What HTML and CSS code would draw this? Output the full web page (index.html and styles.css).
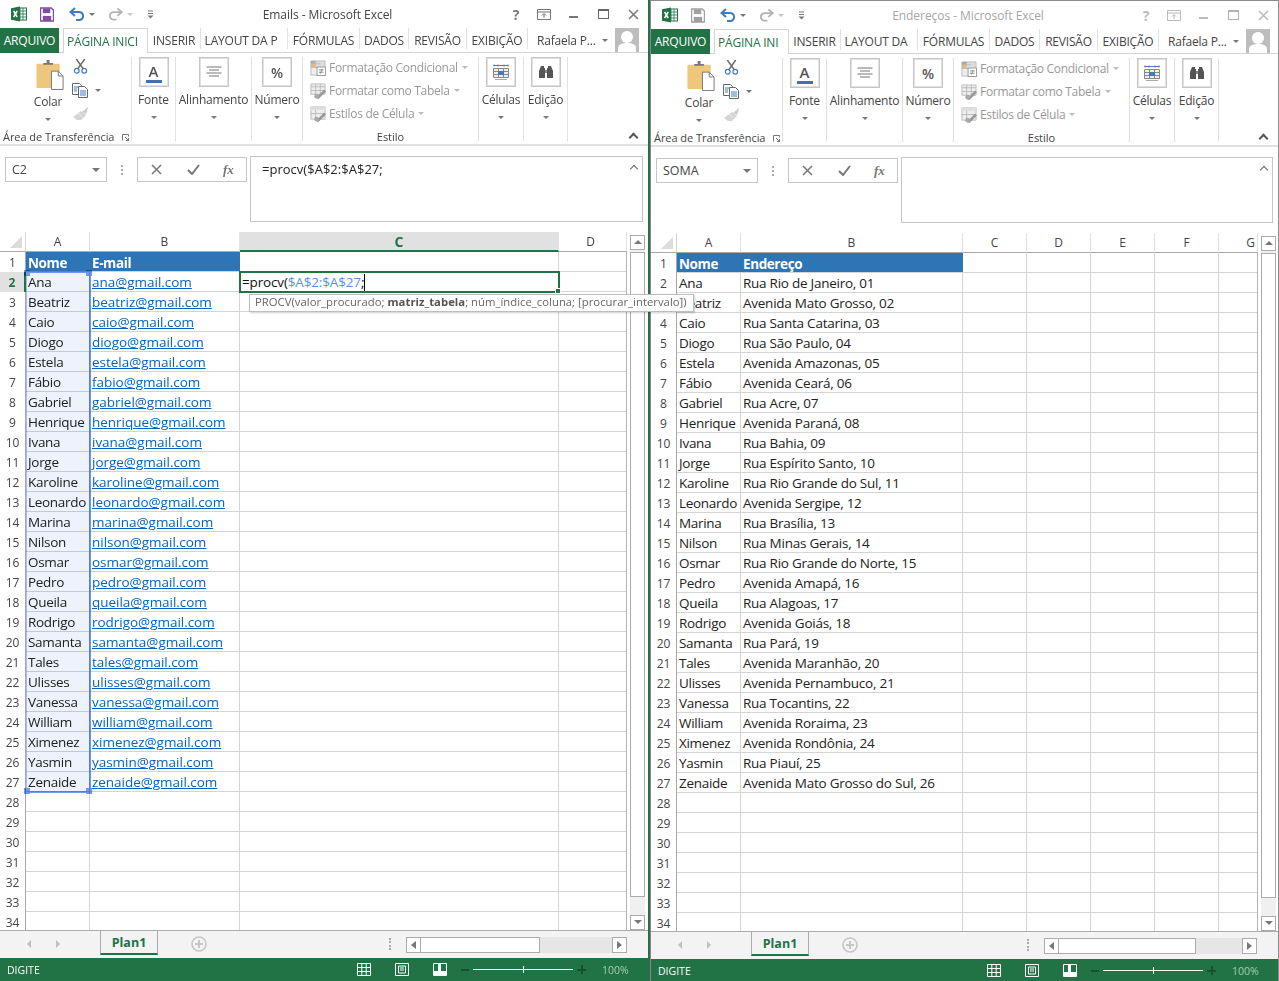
FILE: index.html
```html
<!DOCTYPE html>
<html lang="pt-BR">
<head>
<meta charset="utf-8">
<title>Excel - Emails e Endereços</title>
<link rel="stylesheet" href="styles.css">
</head>
<body>
<svg class="sprite" aria-hidden="true">
<symbol id="xl" viewBox="0 0 16 16"><rect x="6" y="2" width="9.5" height="12" fill="#fff" stroke="#217346"/><path d="M9 2v12M12 2v12M6 5h9M6 8h9M6 11h9" stroke="#217346" stroke-width=".8"/><path d="M0 2.2 9 .5v15l-9-1.7z" fill="#217346"/><path d="M2.6 5 6.2 11M6.2 5 2.6 11" stroke="#fff" stroke-width="1.5"/></symbol>
<symbol id="save" viewBox="0 0 15 15"><path d="M.5.5h11.5l2.5 2.5v11.5H.5z" fill="none" stroke="currentColor" stroke-width="1.6"/><rect x="3" y="1" width="8" height="5" fill="currentColor"/><rect x="3" y="9" width="9" height="5.5" fill="currentColor"/></symbol>
<symbol id="undo" viewBox="0 0 16 14"><path d="M6 1 1.5 5 6 9" fill="none" stroke="currentColor" stroke-width="2"/><path d="M2 5h7.5c6 0 6 8 .5 8H7" fill="none" stroke="currentColor" stroke-width="2"/></symbol>
<symbol id="redo" viewBox="0 0 16 14"><path d="M10 1l4.500 4L10 9" fill="none" stroke="currentColor" stroke-width="2"/><path d="M14 5H6.500c-6 0-6 8-.5 8h3" fill="none" stroke="currentColor" stroke-width="2"/></symbol>
<symbol id="custom" viewBox="0 0 7 9"><path d="M1 1h5M1 3.500h5" stroke="currentColor"/><path d="M.5 5.500h6L3.500 8.500z" fill="currentColor"/></symbol>
<symbol id="ribbonopt" viewBox="0 0 14 11"><path d="M.5.5h13v10H.5zM1 3h12" fill="none" stroke="currentColor"/><path d="M7 9V5M5 6.500 7 4.500 9 6.500" fill="none" stroke="currentColor"/></symbol>
<symbol id="clip" viewBox="0 0 29 31"><rect x="0" y="4" width="24" height="25" rx="1" fill="#efc77c"/><path d="M7 5V3h3.500V0h3v3H17v2z" fill="#777"/><path d="M15.500 11.500h7l5 5v14h-12z" fill="#fff" stroke="#777"/><path d="M22.500 11.500v5h5" fill="none" stroke="#777"/></symbol>
<symbol id="scis" viewBox="0 0 15 16"><circle cx="3.500" cy="12.500" r="2.500" fill="none" stroke="#3f7cbf" stroke-width="1.300"/><circle cx="11.500" cy="12.500" r="2.500" fill="none" stroke="#3f7cbf" stroke-width="1.300"/><path d="M3 0 10.500 10.500M12 0 4.500 10.500" stroke="#6a6a6a" stroke-width="1.600"/></symbol>
<symbol id="copy" viewBox="0 0 16 15"><path d="M.5.5h7l2 2v9h-9z" fill="#fff" stroke="#666"/><path d="M6.500 3.500h6l3 3v8h-9z" fill="#fff" stroke="#666"/><path d="M2 4h4M2 6h3M2 8h3M8 8h6M8 10h6M8 12h6" stroke="#3f7cbf"/></symbol>
<symbol id="brush" viewBox="0 0 16 14"><path d="M9 6 15.500.5 13 8z" fill="#ccc"/><path d="M8 5 13 9 8 14H4L0 11z" fill="#d4d4d4"/><path d="M5 7 9 11" stroke="#eee"/></symbol>
<symbol id="align" viewBox="0 0 16 12"><path d="M.5 1h15M3 4h10M.5 7h15M3 10h10" stroke="#777"/></symbol>
<symbol id="cf" viewBox="0 0 17 17"><path d="M1 1h15v7H1z" fill="#ddd" stroke="#bbb"/><path d="M1 4h10" stroke="#bbb"/><rect x="1" y="1" width="5" height="3" fill="#aaa"/><rect x="1" y="4" width="5" height="4" fill="#ddbb88"/><rect x="1" y="8" width="9" height="8" fill="#eee" stroke="#bbb"/><rect x="7.500" y="7.500" width="9" height="9" fill="#fff" stroke="#999"/><path d="M9.500 10.500h5M9.500 13h5M13 9.500 11 14.500" stroke="#888"/></symbol>
<symbol id="ft" viewBox="0 0 17 17"><path d="M1 1h15v11H1z" fill="#eee" stroke="#bbb"/><path d="M1 4h15M1 8h15M6 1v11M11 1v11" stroke="#bbb"/><path d="M6 16 15 7l2 2-8 8z" fill="#999"/><circle cx="7" cy="14" r="2.500" fill="#aaa"/></symbol>
<symbol id="cs" viewBox="0 0 17 17"><path d="M1 1h15v13H1z" fill="#eee" stroke="#bbb"/><path d="M1 1h15v3H1z" fill="#ddd"/><path d="M1 8h15M6 4v10" stroke="#bbb"/><path d="M6 16 15 7l2 2-8 8z" fill="#999"/><circle cx="7" cy="14" r="2.500" fill="#aaa"/></symbol>
<symbol id="cells" viewBox="0 0 16 16"><path d="M.5 1.500h15M1 .5v2M15 .5v2M5 .5v2M11 .5v2" stroke="#3f7cbf"/><path d="M.5 4.500h15v9H.5zM.5 7.500h15M.5 10.500h15M5.500 4.500v9M10.500 4.500v9" fill="#eee" stroke="#888"/><rect x="5" y="7" width="6" height="4" fill="#3f7cbf"/><path d="M2 15.500h12" stroke="#aaa"/></symbol>
<symbol id="bino" viewBox="0 0 16 16"><path d="M3 2h3v2h1v10H1V7zM13 2h-3v2H9v10h6V7z" fill="#555"/><path d="M7 6h2v3H7z" fill="#888"/></symbol>
<symbol id="launch" viewBox="0 0 7 7"><path d="M.5 6.500V.5h6v2M3 3l3.500 3.500M6.500 4v2.500H4" fill="none" stroke="#777"/></symbol>
<symbol id="cross" viewBox="0 0 11 11"><path d="M1 1l9 9M10 1l-9 9" stroke="#777" stroke-width="1.500"/></symbol>
<symbol id="check" viewBox="0 0 13 11"><path d="M1 6l4 4 7-9" fill="none" stroke="#777" stroke-width="2"/></symbol>
<symbol id="pluscirc" viewBox="0 0 16 16"><circle cx="8" cy="8" r="7" fill="none" stroke="#c6c6c6" stroke-width="1.600"/><path d="M8 4v8M4 8h8" stroke="#c6c6c6" stroke-width="2"/></symbol>
<symbol id="vgrid" viewBox="0 0 14 13"><path d="M.5.5h13v12H.5zM.5 4.500h13M.5 8.500h13M4.800.5v12M9.200.5v12" fill="none" stroke="#fff"/></symbol>
<symbol id="vpage" viewBox="0 0 14 13"><path d="M.5.5h13v12H.5z" fill="none" stroke="#fff"/><path d="M3.500 3h7v7h-7zM5 5h4M5 7h4" fill="none" stroke="#fff"/></symbol>
<symbol id="vbreak" viewBox="0 0 14 13"><path d="M.5.500h13v12H.5z" fill="none" stroke="#fff"/><path d="M1 8h12v4H1zM5 1h3v7H5z" fill="#fff"/></symbol>
<symbol id="avatar" viewBox="0 0 24 24"><rect width="24" height="24" fill="#bdbdbd"/><circle cx="12" cy="9" r="6" fill="#fff"/><path d="M3 24v-4c0-4 5-5 9-5s9 1 9 5v4z" fill="#fff"/></symbol>
</svg>

<section class="win win--active">
  <header class="titlebar">
    <div class="qat">
      <svg class="ic ic-xl"><use href="#xl"/></svg>
      <svg class="ic ic-save"><use href="#save"/></svg>
      <svg class="ic ic-undo"><use href="#undo"/></svg><span class="dd dd--qat"></span>
      <svg class="ic ic-redo"><use href="#redo"/></svg><span class="dd dd--qat dd--light"></span>
      <svg class="ic ic-custom"><use href="#custom"/></svg>
    </div>
    <div class="wintitle">Emails - Microsoft Excel</div>
    <div class="wctl">
      <span class="wc wc--s wc--help">?</span>
      <span class="wc wc--s"><svg class="ic ic-ropt"><use href="#ribbonopt"/></svg></span>
      <span class="wc"><i class="wmin"></i></span>
      <span class="wc"><i class="wmax"></i></span>
      <span class="wc"><svg class="ic ic-close"><use href="#cross"/></svg></span>
    </div>
  </header>
  <nav class="tabs">
    <span class="tab-file">ARQUIVO</span>
    <span class="tab-home w-84">PÁGINA INICI</span>
    <span class="tab w-53">INSERIR</span>
    <span class="tab tab--lay w-87">LAYOUT DA P</span>
    <span class="tab w-72">FÓRMULAS</span>
    <span class="tab w-49">DADOS</span>
    <span class="tab w-58">REVISÃO</span>
    <span class="tab w-61">EXIBIÇÃO</span>
    <span class="user"><span class="username">Rafaela P...</span><span class="dd dd--user"></span><svg class="avatar"><use href="#avatar"/></svg></span>
  </nav>
  <div class="ribbon">
    <div class="grp g-clip">
      <div class="grp-body">
        <div class="paste"><svg class="ic-clip"><use href="#clip"/></svg><span class="lbl">Colar</span><span class="dd"></span></div>
        <div class="clip-tools">
          <svg class="ic-scis"><use href="#scis"/></svg>
          <span class="copy"><svg class="ic-copy"><use href="#copy"/></svg><span class="dd"></span></span>
          <svg class="ic-brush"><use href="#brush"/></svg>
        </div>
      </div>
      <div class="grp-lbl grp-lbl--left">Área de Transferência<svg class="launch"><use href="#launch"/></svg></div>
    </div>
    <div class="grp g-44"><div class="rbtn"><span class="box"><span class="font-a">A</span></span><span class="lbl">Fonte</span><span class="dd"></span></div></div>
    <div class="grp g-76"><div class="rbtn"><span class="box"><svg class="ic-align"><use href="#align"/></svg></span><span class="lbl">Alinhamento</span><span class="dd"></span></div></div>
    <div class="grp g-51"><div class="rbtn"><span class="box"><span class="pct">%</span></span><span class="lbl">Número</span><span class="dd"></span></div></div>
    <div class="grp g-176">
      <div class="styles">
        <div class="sty"><svg class="ic-sty"><use href="#cf"/></svg>Formatação Condicional<span class="dd dd--sm"></span></div>
        <div class="sty"><svg class="ic-sty"><use href="#ft"/></svg>Formatar como Tabela<span class="dd dd--sm"></span></div>
        <div class="sty"><svg class="ic-sty"><use href="#cs"/></svg>Estilos de Célula<span class="dd dd--sm"></span></div>
      </div>
      <div class="grp-lbl">Estilo</div>
    </div>
    <div class="grp g-45"><div class="rbtn"><span class="box"><svg class="ic-cells"><use href="#cells"/></svg></span><span class="lbl">Células</span><span class="dd"></span></div></div>
    <div class="grp g-44"><div class="rbtn"><span class="box"><svg class="ic-bino"><use href="#bino"/></svg></span><span class="lbl">Edição</span><span class="dd"></span></div></div>
    <span class="collapse"></span>
  </div>
  <div class="fbar">
    <div class="namebox"><span>C2</span><span class="dd dd--name"></span></div>
    <span class="fdots"></span>
    <div class="fbtns"><svg class="ic-cross"><use href="#cross"/></svg><svg class="ic-check"><use href="#check"/></svg><span class="fx">fx</span></div>
    <div class="finput"><span>=procv($A$2:$A$27;</span><span class="fcaret"></span></div>
  </div>
  <div class="sheetwrap">
    <div class="grid grid--l">
      <div class="colhdr">
        <span class="corner"><i></i></span>
        <span class="ch w64">A</span><span class="ch w150">B</span><span class="ch ch--on w319">C</span><span class="ch w68">D</span>
      </div>
      <div class="rows rows--l">
        <div class="row"><span class="rh">1</span><span class="c w64 hd">Nome</span><span class="c w150 hd">E-mail</span></div>
        <div class="row"><span class="rh rh--on">2</span><span class="c w64">Ana</span><span class="c w150"><a>ana@gmail.com</a></span></div>
        <div class="row"><span class="rh">3</span><span class="c w64">Beatriz</span><span class="c w150"><a>beatriz@gmail.com</a></span></div>
        <div class="row"><span class="rh">4</span><span class="c w64">Caio</span><span class="c w150"><a>caio@gmail.com</a></span></div>
        <div class="row"><span class="rh">5</span><span class="c w64">Diogo</span><span class="c w150"><a>diogo@gmail.com</a></span></div>
        <div class="row"><span class="rh">6</span><span class="c w64">Estela</span><span class="c w150"><a>estela@gmail.com</a></span></div>
        <div class="row"><span class="rh">7</span><span class="c w64">Fábio</span><span class="c w150"><a>fabio@gmail.com</a></span></div>
        <div class="row"><span class="rh">8</span><span class="c w64">Gabriel</span><span class="c w150"><a>gabriel@gmail.com</a></span></div>
        <div class="row"><span class="rh">9</span><span class="c w64">Henrique</span><span class="c w150"><a>henrique@gmail.com</a></span></div>
        <div class="row"><span class="rh">10</span><span class="c w64">Ivana</span><span class="c w150"><a>ivana@gmail.com</a></span></div>
        <div class="row"><span class="rh">11</span><span class="c w64">Jorge</span><span class="c w150"><a>jorge@gmail.com</a></span></div>
        <div class="row"><span class="rh">12</span><span class="c w64">Karoline</span><span class="c w150"><a>karoline@gmail.com</a></span></div>
        <div class="row"><span class="rh">13</span><span class="c w64">Leonardo</span><span class="c w150"><a>leonardo@gmail.com</a></span></div>
        <div class="row"><span class="rh">14</span><span class="c w64">Marina</span><span class="c w150"><a>marina@gmail.com</a></span></div>
        <div class="row"><span class="rh">15</span><span class="c w64">Nilson</span><span class="c w150"><a>nilson@gmail.com</a></span></div>
        <div class="row"><span class="rh">16</span><span class="c w64">Osmar</span><span class="c w150"><a>osmar@gmail.com</a></span></div>
        <div class="row"><span class="rh">17</span><span class="c w64">Pedro</span><span class="c w150"><a>pedro@gmail.com</a></span></div>
        <div class="row"><span class="rh">18</span><span class="c w64">Queila</span><span class="c w150"><a>queila@gmail.com</a></span></div>
        <div class="row"><span class="rh">19</span><span class="c w64">Rodrigo</span><span class="c w150"><a>rodrigo@gmail.com</a></span></div>
        <div class="row"><span class="rh">20</span><span class="c w64">Samanta</span><span class="c w150"><a>samanta@gmail.com</a></span></div>
        <div class="row"><span class="rh">21</span><span class="c w64">Tales</span><span class="c w150"><a>tales@gmail.com</a></span></div>
        <div class="row"><span class="rh">22</span><span class="c w64">Ulisses</span><span class="c w150"><a>ulisses@gmail.com</a></span></div>
        <div class="row"><span class="rh">23</span><span class="c w64">Vanessa</span><span class="c w150"><a>vanessa@gmail.com</a></span></div>
        <div class="row"><span class="rh">24</span><span class="c w64">William</span><span class="c w150"><a>william@gmail.com</a></span></div>
        <div class="row"><span class="rh">25</span><span class="c w64">Ximenez</span><span class="c w150"><a>ximenez@gmail.com</a></span></div>
        <div class="row"><span class="rh">26</span><span class="c w64">Yasmin</span><span class="c w150"><a>yasmin@gmail.com</a></span></div>
        <div class="row"><span class="rh">27</span><span class="c w64">Zenaide</span><span class="c w150"><a>zenaide@gmail.com</a></span></div>
        <div class="row"><span class="rh">28</span><span class="c w64"></span><span class="c w150"></span></div>
        <div class="row"><span class="rh">29</span><span class="c w64"></span><span class="c w150"></span></div>
        <div class="row"><span class="rh">30</span><span class="c w64"></span><span class="c w150"></span></div>
        <div class="row"><span class="rh">31</span><span class="c w64"></span><span class="c w150"></span></div>
        <div class="row"><span class="rh">32</span><span class="c w64"></span><span class="c w150"></span></div>
        <div class="row"><span class="rh">33</span><span class="c w64"></span><span class="c w150"></span></div>
        <div class="row"><span class="rh">34</span><span class="c w64"></span><span class="c w150"></span></div>
      </div>
      <div class="refsel"><i class="hnd h1"></i><i class="hnd h2"></i><i class="hnd h3"></i><i class="hnd h4"></i></div>
      <div class="activecell"><span>=procv(<span class="ref">$A$2:$A$27</span>;</span><span class="ccaret"></span><i class="achnd"></i></div>
      <div class="tip">PROCV(valor_procurado; <b>matriz_tabela</b>; núm_índice_coluna; [procurar_intervalo])</div>
    </div>
    <div class="vscroll"><span class="sbtn sbtn--up"></span><span class="vthumb"></span><span class="sbtn sbtn--down"></span></div>
  </div>
  <div class="sheetbar">
    <span class="arrow arrow--l"></span><span class="arrow arrow--r"></span>
    <span class="plan">Plan1</span>
    <svg class="ic-plus"><use href="#pluscirc"/></svg>
    <span class="spacer"></span>
    <span class="sdots"></span>
    <div class="hscroll hscroll--l"><span class="hbtn hbtn--l"></span><span class="hthumb"></span><span class="htrack"></span><span class="hbtn hbtn--r"></span></div>
  </div>
  <footer class="status">
    <span>DIGITE</span>
    <span class="spacer"></span>
    <svg class="ic-view"><use href="#vgrid"/></svg><svg class="ic-view"><use href="#vpage"/></svg><svg class="ic-view"><use href="#vbreak"/></svg>
    <span class="zm"><i class="zminus"></i><span class="zline"><i></i></span><i class="zplus"></i></span>
    <span class="zpct">100%</span>
  </footer>
</section>

<section class="win win--idle">
  <header class="titlebar">
    <div class="qat">
      <svg class="ic ic-xl"><use href="#xl"/></svg>
      <svg class="ic ic-save"><use href="#save"/></svg>
      <svg class="ic ic-undo"><use href="#undo"/></svg><span class="dd dd--qat"></span>
      <svg class="ic ic-redo"><use href="#redo"/></svg><span class="dd dd--qat dd--light"></span>
      <svg class="ic ic-custom"><use href="#custom"/></svg>
    </div>
    <div class="wintitle">Endereços - Microsoft Excel</div>
    <div class="wctl">
      <span class="wc wc--s wc--help">?</span>
      <span class="wc wc--s"><svg class="ic ic-ropt"><use href="#ribbonopt"/></svg></span>
      <span class="wc"><i class="wmin"></i></span>
      <span class="wc"><i class="wmax"></i></span>
      <span class="wc"><svg class="ic ic-close"><use href="#cross"/></svg></span>
    </div>
  </header>
  <nav class="tabs">
    <span class="tab-file">ARQUIVO</span>
    <span class="tab-home w-74">PÁGINA INI</span>
    <span class="tab w-52">INSERIR</span>
    <span class="tab tab--lay w-77">LAYOUT DA</span>
    <span class="tab w-72">FÓRMULAS</span>
    <span class="tab w-50">DADOS</span>
    <span class="tab w-58">REVISÃO</span>
    <span class="tab w-61">EXIBIÇÃO</span>
    <span class="user"><span class="username">Rafaela P...</span><span class="dd dd--user"></span><svg class="avatar"><use href="#avatar"/></svg></span>
  </nav>
  <div class="ribbon">
    <div class="grp g-clip">
      <div class="grp-body">
        <div class="paste"><svg class="ic-clip"><use href="#clip"/></svg><span class="lbl">Colar</span><span class="dd"></span></div>
        <div class="clip-tools">
          <svg class="ic-scis"><use href="#scis"/></svg>
          <span class="copy"><svg class="ic-copy"><use href="#copy"/></svg><span class="dd"></span></span>
          <svg class="ic-brush"><use href="#brush"/></svg>
        </div>
      </div>
      <div class="grp-lbl grp-lbl--left">Área de Transferência<svg class="launch"><use href="#launch"/></svg></div>
    </div>
    <div class="grp g-44"><div class="rbtn"><span class="box"><span class="font-a">A</span></span><span class="lbl">Fonte</span><span class="dd"></span></div></div>
    <div class="grp g-76"><div class="rbtn"><span class="box"><svg class="ic-align"><use href="#align"/></svg></span><span class="lbl">Alinhamento</span><span class="dd"></span></div></div>
    <div class="grp g-51"><div class="rbtn"><span class="box"><span class="pct">%</span></span><span class="lbl">Número</span><span class="dd"></span></div></div>
    <div class="grp g-176">
      <div class="styles">
        <div class="sty"><svg class="ic-sty"><use href="#cf"/></svg>Formatação Condicional<span class="dd dd--sm"></span></div>
        <div class="sty"><svg class="ic-sty"><use href="#ft"/></svg>Formatar como Tabela<span class="dd dd--sm"></span></div>
        <div class="sty"><svg class="ic-sty"><use href="#cs"/></svg>Estilos de Célula<span class="dd dd--sm"></span></div>
      </div>
      <div class="grp-lbl">Estilo</div>
    </div>
    <div class="grp g-45"><div class="rbtn"><span class="box"><svg class="ic-cells"><use href="#cells"/></svg></span><span class="lbl">Células</span><span class="dd"></span></div></div>
    <div class="grp g-44"><div class="rbtn"><span class="box"><svg class="ic-bino"><use href="#bino"/></svg></span><span class="lbl">Edição</span><span class="dd"></span></div></div>
    <span class="collapse"></span>
  </div>
  <div class="fbar">
    <div class="namebox"><span>SOMA</span><span class="dd dd--name"></span></div>
    <span class="fdots"></span>
    <div class="fbtns"><svg class="ic-cross"><use href="#cross"/></svg><svg class="ic-check"><use href="#check"/></svg><span class="fx">fx</span></div>
    <div class="finput"><span class="fcaret"></span></div>
  </div>
  <div class="sheetwrap">
    <div class="grid grid--r">
      <div class="colhdr">
        <span class="corner"><i></i></span>
        <span class="ch w64">A</span><span class="ch w222">B</span><span class="ch w64">C</span><span class="ch w64">D</span><span class="ch w64">E</span><span class="ch w64">F</span><span class="ch w39">G</span>
      </div>
      <div class="rows rows--r">
        <div class="row"><span class="rh">1</span><span class="c w64 hd">Nome</span><span class="c w222 hd">Endereço</span></div>
        <div class="row"><span class="rh">2</span><span class="c w64">Ana</span><span class="c w222">Rua Rio de Janeiro, 01</span></div>
        <div class="row"><span class="rh">3</span><span class="c w64">Beatriz</span><span class="c w222">Avenida Mato Grosso, 02</span></div>
        <div class="row"><span class="rh">4</span><span class="c w64">Caio</span><span class="c w222">Rua Santa Catarina, 03</span></div>
        <div class="row"><span class="rh">5</span><span class="c w64">Diogo</span><span class="c w222">Rua São Paulo, 04</span></div>
        <div class="row"><span class="rh">6</span><span class="c w64">Estela</span><span class="c w222">Avenida Amazonas, 05</span></div>
        <div class="row"><span class="rh">7</span><span class="c w64">Fábio</span><span class="c w222">Avenida Ceará, 06</span></div>
        <div class="row"><span class="rh">8</span><span class="c w64">Gabriel</span><span class="c w222">Rua Acre, 07</span></div>
        <div class="row"><span class="rh">9</span><span class="c w64">Henrique</span><span class="c w222">Avenida Paraná, 08</span></div>
        <div class="row"><span class="rh">10</span><span class="c w64">Ivana</span><span class="c w222">Rua Bahia, 09</span></div>
        <div class="row"><span class="rh">11</span><span class="c w64">Jorge</span><span class="c w222">Rua Espírito Santo, 10</span></div>
        <div class="row"><span class="rh">12</span><span class="c w64">Karoline</span><span class="c w222">Rua Rio Grande do Sul, 11</span></div>
        <div class="row"><span class="rh">13</span><span class="c w64">Leonardo</span><span class="c w222">Avenida Sergipe, 12</span></div>
        <div class="row"><span class="rh">14</span><span class="c w64">Marina</span><span class="c w222">Rua Brasília, 13</span></div>
        <div class="row"><span class="rh">15</span><span class="c w64">Nilson</span><span class="c w222">Rua Minas Gerais, 14</span></div>
        <div class="row"><span class="rh">16</span><span class="c w64">Osmar</span><span class="c w222">Rua Rio Grande do Norte, 15</span></div>
        <div class="row"><span class="rh">17</span><span class="c w64">Pedro</span><span class="c w222">Avenida Amapá, 16</span></div>
        <div class="row"><span class="rh">18</span><span class="c w64">Queila</span><span class="c w222">Rua Alagoas, 17</span></div>
        <div class="row"><span class="rh">19</span><span class="c w64">Rodrigo</span><span class="c w222">Avenida Goiás, 18</span></div>
        <div class="row"><span class="rh">20</span><span class="c w64">Samanta</span><span class="c w222">Rua Pará, 19</span></div>
        <div class="row"><span class="rh">21</span><span class="c w64">Tales</span><span class="c w222">Avenida Maranhão, 20</span></div>
        <div class="row"><span class="rh">22</span><span class="c w64">Ulisses</span><span class="c w222">Avenida Pernambuco, 21</span></div>
        <div class="row"><span class="rh">23</span><span class="c w64">Vanessa</span><span class="c w222">Rua Tocantins, 22</span></div>
        <div class="row"><span class="rh">24</span><span class="c w64">William</span><span class="c w222">Avenida Roraima, 23</span></div>
        <div class="row"><span class="rh">25</span><span class="c w64">Ximenez</span><span class="c w222">Avenida Rondônia, 24</span></div>
        <div class="row"><span class="rh">26</span><span class="c w64">Yasmin</span><span class="c w222">Rua Piauí, 25</span></div>
        <div class="row"><span class="rh">27</span><span class="c w64">Zenaide</span><span class="c w222">Avenida Mato Grosso do Sul, 26</span></div>
        <div class="row"><span class="rh">28</span><span class="c w64"></span><span class="c w222"></span></div>
        <div class="row"><span class="rh">29</span><span class="c w64"></span><span class="c w222"></span></div>
        <div class="row"><span class="rh">30</span><span class="c w64"></span><span class="c w222"></span></div>
        <div class="row"><span class="rh">31</span><span class="c w64"></span><span class="c w222"></span></div>
        <div class="row"><span class="rh">32</span><span class="c w64"></span><span class="c w222"></span></div>
        <div class="row"><span class="rh">33</span><span class="c w64"></span><span class="c w222"></span></div>
        <div class="row"><span class="rh">34</span><span class="c w64"></span><span class="c w222"></span></div>
      </div>
    </div>
    <div class="vscroll"><span class="sbtn sbtn--up"></span><span class="vthumb"></span><span class="sbtn sbtn--down"></span></div>
  </div>
  <div class="sheetbar">
    <span class="arrow arrow--l"></span><span class="arrow arrow--r"></span>
    <span class="plan">Plan1</span>
    <svg class="ic-plus"><use href="#pluscirc"/></svg>
    <span class="spacer"></span>
    <span class="sdots"></span>
    <div class="hscroll hscroll--r"><span class="hbtn hbtn--l"></span><span class="hthumb"></span><span class="htrack"></span><span class="hbtn hbtn--r"></span></div>
  </div>
  <footer class="status">
    <span>DIGITE</span>
    <span class="spacer"></span>
    <svg class="ic-view"><use href="#vgrid"/></svg><svg class="ic-view"><use href="#vpage"/></svg><svg class="ic-view"><use href="#vbreak"/></svg>
    <span class="zm"><i class="zminus"></i><span class="zline"><i></i></span><i class="zplus"></i></span>
    <span class="zpct">100%</span>
  </footer>
</section>
</body>
</html>
```

FILE: styles.css
```css
*{box-sizing:border-box}
html,body{margin:0;height:981px;overflow:hidden}
body{display:flex;background:#fff;font:12px "Open Sans","Noto Sans",sans-serif;color:#444}
.sprite{width:0;height:0;position:absolute}
svg{display:block;flex:none}
i{display:block;font-style:normal}
.spacer{flex:1}

/* windows */
.win{position:relative;display:flex;flex-direction:column;background:#fff}
.win--active{flex:0 0 650px;height:981px;border-right:2px solid #2f6a4b;z-index:2;box-shadow:1px 0 0 #8a8a8a}
.win--idle{flex:1;height:982px;border:solid #8c8c8c;border-width:1px 1px 0 1px;min-width:0}

/* title bar */
.titlebar{flex:0 0 28px;min-height:0;display:flex;align-items:center}
.qat,.wctl{flex:1 1 0;display:flex;align-items:center;min-width:0}
.wctl{justify-content:flex-end}
.qat{padding-left:11px;color:#777}
.wintitle{font-size:12px;color:#444;white-space:nowrap;letter-spacing:-.05px;margin-right:4px}
.win--idle .wintitle{color:#a6a6a6}
.ic-xl{width:16px;height:16px}
.ic-save{width:14px;height:15px;margin-left:13px;color:#7d4f9f}
.win--idle .ic-save{color:#a0a0a0}
.ic-undo{width:16px;height:14px;margin-left:15px;color:#3f7cbf}
.ic-redo{width:15px;height:14px;margin-left:13px;color:#b4b4b4}
.ic-custom{width:7px;height:9px;margin-left:14px;color:#777}
.dd{display:block;width:0;height:0;border:solid transparent;border-width:3.5px 3.5px 0;border-top-color:#777;flex:none}
.dd--qat{margin-left:4px}
.dd--light{border-top-color:#c8c8c8}
.dd--sm{display:inline-block;border-width:3px 3px 0;border-top-color:#bbb;margin-left:4px;vertical-align:middle}
.wc{flex:0 0 30px;display:flex;align-items:center;justify-content:center;height:24px;color:#777}
.wc--s{flex-basis:28px}
.wc--help{font-size:14px;font-weight:700}
.ic-ropt{width:14px;height:11px}
.ic-close{width:11px;height:11px}
.wmin{width:9px;height:2px;background:#777;margin-top:5px}
.wmax{width:11px;height:10px;border:1px solid #666;border-top-width:2px}
.win--idle .wc{opacity:.5}

/* tabs */
.tabs{flex:0 0 25px;min-height:0;display:flex;align-items:stretch;border-bottom:1px solid #d4d4d4;font-size:12px;white-space:nowrap;letter-spacing:-.2px}
.tab-file{flex:0 0 59px;background:#217346;color:#fff;display:flex;align-items:center;justify-content:center;margin-bottom:-1px}
.tab-home{margin-left:4px;background:#fff;border:1px solid #d4d4d4;border-bottom:0;color:#217346;padding-left:3px;display:flex;align-items:center;margin-bottom:-1px;overflow:hidden;z-index:1}
.tab{border-right:1px solid #e1e1e1;display:flex;align-items:center;justify-content:center;overflow:hidden;margin-bottom:3px;padding-top:3px}
.tab--lay{padding-right:6px}
.w-84{flex:0 0 85px}.w-74{flex:0 0 75px}
.w-53{flex:0 0 53px}.w-52{flex:0 0 52px}.w-87{flex:0 0 87px}.w-77{flex:0 0 77px}.w-72{flex:0 0 72px}.w-49{flex:0 0 49px}.w-50{flex:0 0 50px}.w-58{flex:0 0 58px}.w-61{flex:0 0 61px}
.user{flex:1;display:flex;align-items:center;padding-left:9px;min-width:0}
.username{flex:0 0 57px;font-size:12px}
.dd--user{margin-left:6px;border-width:3px 3px 0}
.avatar{width:24px;height:24px;margin-left:7px;margin-top:-1px}

/* ribbon */
.ribbon{position:relative;flex:0 0 93px;min-height:0;display:flex;align-items:stretch;padding:4px 0 3px;border-bottom:2px solid #e1e1e1}
.grp{position:relative;min-height:0;border-right:1px solid #e1e1e1;display:flex;flex-direction:column;align-items:center;color:#444}
.g-clip{flex:0 0 132px}.g-44{flex:0 0 44px}.g-76{flex:0 0 76px}.g-51{flex:0 0 51px}.g-176{flex:0 0 176px}.g-45{flex:0 0 45px}
.grp-body{display:flex;flex:1;min-height:0;width:100%}
.paste{flex:0 0 72px;display:flex;flex-direction:column;align-items:center;padding:3px 0 0 24px}
.ic-clip{width:29px;height:30px;margin-left:4px}
.paste .lbl{margin-top:4px}
.paste .dd{margin-top:8px}
.clip-tools{display:flex;flex-direction:column;padding-top:2px}
.ic-scis{width:15px;height:15px;margin-left:1px}
.copy{display:flex;align-items:center;margin-top:9px}
.ic-copy{width:16px;height:15px}
.copy .dd{margin-left:7px}
.ic-brush{width:16px;height:14px;margin-top:8px;margin-left:1px}
.lbl{font-size:12px;line-height:16px;white-space:nowrap;letter-spacing:-.2px}
.grp-lbl{flex:none;font-size:11px;line-height:14px;letter-spacing:0;margin-bottom:-3px;text-align:center;white-space:nowrap}
.grp-lbl--left{align-self:flex-start;padding-left:3px;display:flex;align-items:center;letter-spacing:-.05px}
.launch{width:7px;height:7px;margin-left:8px}
.rbtn{display:flex;flex-direction:column;align-items:center;width:100%}
.box{width:30px;height:30px;border:1px solid #c6c6c6;display:flex;align-items:center;justify-content:center;outline:1px solid #e1e1e1;outline-offset:-2px}
.rbtn .lbl{margin-top:5px}
.rbtn .dd{margin-top:8px}
.font-a{font-size:15px;line-height:17px;color:#555;border-bottom:3px solid #3f72ae;width:16px;text-align:center;margin-top:1px;font-weight:600}
.pct{font-size:14px;color:#555;font-weight:600}
.ic-align{width:16px;height:12px}
.ic-cells{width:16px;height:16px}
.ic-bino{width:16px;height:16px}
.styles{flex:1;min-height:0;width:100%;padding:0 0 0 7px;margin-top:-1px;color:#999;font-size:12px;letter-spacing:-.3px}
.sty{display:flex;align-items:center;height:23px;white-space:nowrap}
.ic-sty{width:16px;height:16px;margin-right:3px}
.collapse{position:absolute;right:11px;bottom:3px;width:7px;height:7px;border:solid #555;border-width:2px 0 0 2px;transform:rotate(45deg)}

/* formula bar */
.fbar{flex:0 0 86px;min-height:0;display:flex;align-items:flex-start;padding:10px 5px 0 5px}
.namebox{flex:0 0 102px;height:25px;border:1px solid #c6c6c6;display:flex;align-items:center;justify-content:space-between;padding:0 6px;font-size:12.5px;margin-top:1px}
.dd--name{border-width:4px 4px 0}
.fdots{flex:0 0 2px;height:10px;margin:9px 14px 0;border-left:2px dotted #aaa}
.fbtns{flex:0 0 110px;height:25px;margin-top:1px;border:1px solid #c6c6c6;display:flex;align-items:center;padding-left:13px}
.ic-cross{width:11px;height:11px}
.ic-check{width:13px;height:11px;margin-left:25px}
.fx{font:italic 700 13px "Liberation Serif",serif;color:#777;margin-left:23px}
.finput{flex:1;height:66px;margin-left:3px;border:1px solid #c6c6c6;padding:3px 11px;font-size:13px;color:#222;position:relative;letter-spacing:.02px}
.fcaret{position:absolute;right:5px;top:9px;width:6px;height:6px;border:solid #666;border-width:1.5px 0 0 1.5px;transform:rotate(45deg)}

/* sheet */
.sheetwrap{flex:1;display:flex;min-height:0}
.grid{position:relative;flex:none;display:flex;flex-direction:column;height:100%}
.grid--l{width:627px}
.grid--r{width:607px}
.colhdr{flex:0 0 20px;display:flex;position:relative}
.corner{flex:0 0 26px;position:relative;border-bottom:1px solid #a8a8a8;border-right:1px solid #d4d4d4}
.corner i{position:absolute;left:10px;top:4px;width:12px;height:12px;background:#dcdcdc;clip-path:polygon(100% 0,100% 100%,0 100%)}
.ch{display:flex;align-items:center;justify-content:center;border-right:1px solid #e1e1e1;border-bottom:1px solid #a8a8a8;font-size:12px;color:#444;overflow:hidden}
.ch--on{background:#e1e1e1;color:#217346;font-weight:700;font-size:14px;border-bottom:2px solid #217346;height:20px}
.w64{flex:0 0 64px}.w150{flex:0 0 150px}.w222{flex:0 0 222px}.w319{flex:0 0 319px}.w68{flex:0 0 68px;padding-right:4px}.w39{flex:0 0 39px;padding-left:25px}
.rows{flex:1;min-height:0;overflow:hidden;border-right:1px solid #b4b4b4;background-repeat:no-repeat;background-size:1px 100%}
.rows--l{background-image:linear-gradient(#d4d4d4,#d4d4d4);background-position:558px 0}
.rows--r{background-image:linear-gradient(#d4d4d4,#d4d4d4),linear-gradient(#d4d4d4,#d4d4d4),linear-gradient(#d4d4d4,#d4d4d4),linear-gradient(#d4d4d4,#d4d4d4);background-position:375px 0,439px 0,503px 0,567px 0}
.row{height:20px;display:flex;border-bottom:1px solid #d4d4d4;font-size:13.5px;line-height:21px;color:#222;position:relative}
.rh{flex:0 0 26px;margin-bottom:-1px;background:#fff;border-right:1px solid #a8a8a8;text-align:center;font-size:12px;color:#444}
.rh--on{background:#e1e1e1;color:#217346;font-weight:700;border-right:2px solid #217346}
.c{border-right:1px solid #d4d4d4;padding-left:2px;white-space:nowrap;overflow:hidden;letter-spacing:-.3px}
.c.w222{letter-spacing:-.25px}
.c a{color:#0563c1;text-decoration:underline;letter-spacing:-.03px}
.c.hd{background:#2e75b6;color:#fff;font-weight:700;border-right-color:#2e75b6;letter-spacing:-.4px;line-height:22px}
.refsel{position:absolute;left:26px;top:39px;width:65px;height:522px;border:2px solid #7097ee;border-left:1px solid #a9bdf0;background:#edf2fc;mix-blend-mode:multiply}
.hnd{position:absolute;width:6px;height:6px;background:#7097ee}
.h1{left:-3px;top:-3px}.h2{right:-3px;top:-3px}.h3{left:-3px;bottom:-3px}.h4{right:-3px;bottom:-3px}
.activecell{position:absolute;left:239px;top:39px;width:321px;height:22px;border:2px solid #217346;background:#fff;font-size:13.5px;line-height:19px;color:#111;padding-left:1px;display:flex;letter-spacing:-.15px}
.ref{color:#5b8ff0}
.ccaret{width:1px;height:17px;background:#000;margin-top:1px}
.achnd{position:absolute;right:-3px;bottom:-3px;width:6px;height:6px;background:#217346;border:1px solid #fff}
.tip{position:absolute;left:249px;top:62px;width:445px;height:18px;background:#fff;border:1px solid #bdbdbd;box-shadow:1px 1px 2px rgba(0,0,0,.2);font-size:11.3px;line-height:14px;padding-left:5px;color:#666;white-space:nowrap;z-index:3;letter-spacing:.02px}
.tip b{font-weight:700;color:#555}
.vscroll{flex:0 0 15px;margin:3px 0 0 3px;display:flex;flex-direction:column;background:#f0f0f0;height:calc(100% - 3px);gap:2px}
.sbtn{flex:0 0 15px;border:1px solid #ababab;background:#fff;position:relative}
.sbtn::after{content:"";position:absolute;left:3px;top:4px;border:solid transparent;border-width:0 4px 4px}
.sbtn--up::after{border-bottom-color:#777}
.sbtn--down::after{border-width:4px 4px 0;border-top-color:#777}
.vthumb{flex:0 0 645px;background:#fff;border:1px solid #ababab}
.sbtn--down{margin-top:auto}

/* sheet tabs */
.sheetbar{flex:0 0 28px;min-height:0;background:#f3f3f3;border-top:1px solid #ababab;display:flex;align-items:flex-start;position:relative}
.arrow{width:0;height:0;border:4px solid transparent;margin-top:9px}
.arrow--l{border-right-color:#c0c0c0;border-left-width:0;margin-left:27px}
.arrow--r{border-left-color:#c0c0c0;border-right-width:0;margin-left:25px}
.plan{margin:-1px 0 0 40px;flex:0 0 58px;height:25px;border:solid #ababab;border-width:0 1px;border-bottom:2px solid #217346;text-align:center;color:#217346;font-weight:700;font-size:12.5px;line-height:26px}
.ic-plus{width:16px;height:16px;margin:5px 0 0 33px}
.sdots{width:2px;height:12px;border-left:2px dotted #aaa;margin:7px 15px 0 0}
.hscroll{height:16px;margin:6px 21px 0 0;background:#e6e6e6;display:flex}
.hscroll--l{flex:0 0 221px}
.hscroll--r{flex:0 0 213px}
.hbtn{flex:0 0 15px;background:#fff;border:1px solid #ababab;position:relative}
.hbtn::after{content:"";position:absolute;top:3px;left:4px;border:solid transparent;border-width:4px 5px 4px 0;border-right-color:#777}
.hbtn--r::after{border-width:4px 0 4px 5px;border-left-color:#777}
.hthumb{background:#fff;border:1px solid #ababab;border-left:0}
.hscroll--l .hthumb{flex:0 0 119px}
.hscroll--r .hthumb{flex:0 0 137px}
.htrack{flex:1}

/* status */
.status{flex:0 0 23px;min-height:0;background:#217346;color:#fff;display:flex;align-items:center;padding:0 20px 0 7px;font-size:10.5px}
.ic-view{width:14px;height:13px;margin-right:24px}
.zm{display:flex;align-items:center;margin-left:-10px}
.zminus{width:8px;height:2px;background:#174f30}
.zline{width:100px;height:1px;background:#fff;margin:0 4px;position:relative}
.zline i{position:absolute;left:50%;top:-3px;width:1px;height:7px;background:#fff}
.zplus{width:9px;height:9px;background:linear-gradient(#174f30,#174f30) center/9px 2px no-repeat,linear-gradient(#174f30,#174f30) center/2px 9px no-repeat}
.zpct{color:#9fd0ae;margin-left:16px;font-size:10.5px;width:26px;white-space:nowrap}
```
